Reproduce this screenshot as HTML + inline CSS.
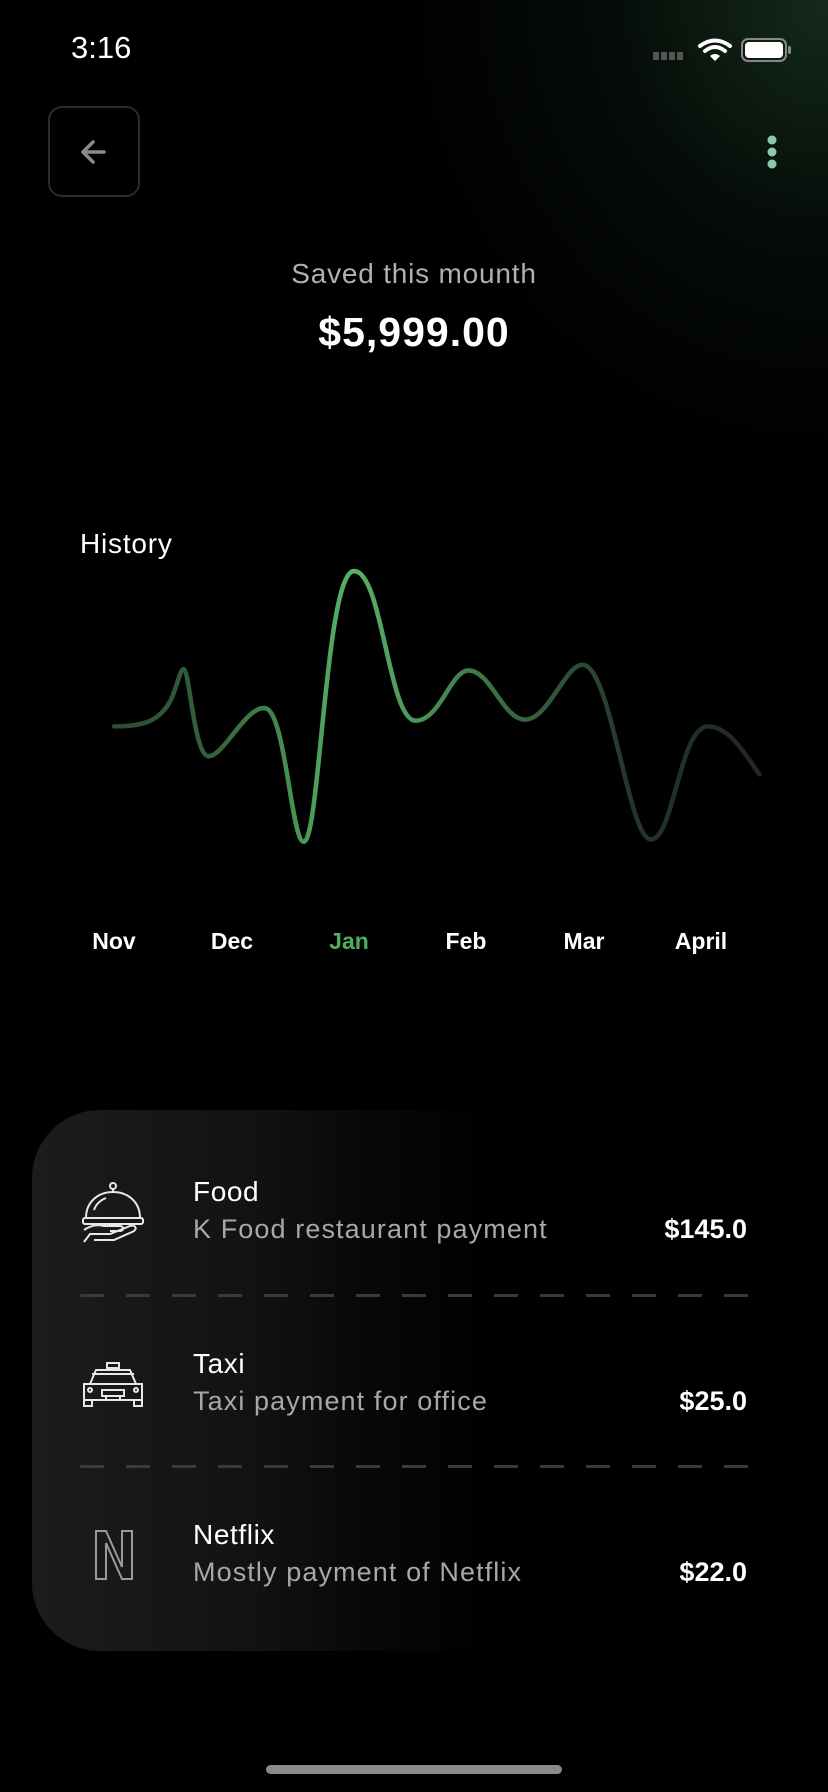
<!DOCTYPE html>
<html><head><meta charset="utf-8"><style>
*{margin:0;padding:0;box-sizing:border-box}
body{width:828px;height:1792px;overflow:hidden;background:#000;font-family:"Liberation Sans",sans-serif;color:#fff;position:relative}
.bg{position:absolute;inset:0;background:radial-gradient(ellipse 430px 460px at 828px 0px,rgba(34,70,46,.6),rgba(18,40,26,.3) 50%,rgba(0,0,0,0) 100%)}
.a{position:absolute}
.time{left:71px;top:30px;font-size:31px;font-weight:500}
.back{left:48px;top:106px;width:92px;height:91px;border:2px solid #2a2a30;border-radius:14px}
.card{left:32px;top:1110px;width:830px;height:541px;border-radius:68px 0 0 68px;background:linear-gradient(90deg,#1c1c1c 0%,#131313 25%,#070707 42%,#000 55%)}
.t{left:193px;font-size:28px;font-weight:500;color:#fff;letter-spacing:.6px}
.s{left:193px;font-size:27px;color:#a8a8a8;letter-spacing:1.1px}
.amt{right:81px;font-size:27px;font-weight:700;text-align:right}
.m{top:928px;font-size:23px;font-weight:700;transform:translateX(-50%)}
.dash{left:80px;width:668px;height:3px;background:repeating-linear-gradient(90deg,#3a3a3a 0 24px,transparent 24px 46px)}
</style></head><body>
<div class="bg"></div>
<div class="a time">3:16</div>
<svg class="a" style="left:650px;top:36px" width="146" height="28" viewBox="0 0 146 28">
<g fill="#555"><rect x="3" y="16" width="6" height="8" rx="1"/><rect x="11" y="16" width="6" height="8" rx="1"/><rect x="19" y="16" width="6" height="8" rx="1"/><rect x="27" y="16" width="6" height="8" rx="1"/></g>
<path d="M50 10 Q65 -1 80 10" stroke="#fff" stroke-width="4" fill="none" stroke-linecap="round"/>
<path d="M55 15 Q65 7 75 15" stroke="#fff" stroke-width="4" fill="none" stroke-linecap="round"/>
<path d="M60 20 L65 25 L70 20 Q65 16 60 20Z" fill="#fff"/>
<rect x="92" y="3" width="44" height="22" rx="6" fill="none" stroke="#888" stroke-width="2"/>
<rect x="95" y="6" width="38" height="16" rx="4" fill="#fff"/>
<rect x="138" y="10" width="3" height="8" rx="1.5" fill="#888"/>
</svg>
<div class="a back"></div>
<svg class="a" style="left:76px;top:134px" width="36" height="36" viewBox="0 0 36 36"><path d="M28 18H8M17 8L7 18L17 28" stroke="#8a8a8e" stroke-width="3.5" fill="none" stroke-linecap="round" stroke-linejoin="round"/></svg>
<svg class="a" style="left:764px;top:134px" width="16" height="36"><g fill="#8cc9a8"><circle cx="8" cy="6" r="4.5"/><circle cx="8" cy="18" r="4.5"/><circle cx="8" cy="30" r="4.5"/></g></svg>
<div class="a" style="left:0;width:828px;top:258px;text-align:center;font-size:28px;color:#b0b0b0;letter-spacing:.8px">Saved this mounth</div>
<div class="a" style="left:0;width:828px;top:309px;text-align:center;font-size:41px;font-weight:700;letter-spacing:1px">$5,999.00</div>
<div class="a" style="left:80px;top:528px;font-size:28px;font-weight:500;letter-spacing:.8px">History</div>
<svg class="a" style="left:0;top:0" width="828" height="1792" viewBox="0 0 725 1569">
<defs><linearGradient id="g" gradientUnits="userSpaceOnUse" x1="100" y1="0" x2="665" y2="0">
<stop offset="0" stop-color="#2d4a33"/><stop offset="0.15" stop-color="#33603b"/><stop offset="0.3" stop-color="#4a9a58"/><stop offset="0.37" stop-color="#58b267"/><stop offset="0.6" stop-color="#3a6c43"/><stop offset="0.8" stop-color="#24362a"/><stop offset="1" stop-color="#1f2822"/></linearGradient></defs>
<path d="M100,636 C125,636 140,632 150,612 C156,598 158,585 161,586 C166,588 170,660 182,662 C195,664 215,618 232,620 C250,622 255,737 266,737 C280,737 285,500 310,500 C335,500 340,631 364,631 C385,631 395,587 410,587 C430,587 440,630 460,630 C480,630 495,582 510,582 C535,582 550,735 570,735 C590,735 595,636 620,636 C640,636 655,665 665,678" stroke="url(#g)" stroke-width="4" fill="none" stroke-linecap="round"/>
</svg>
<div class="a m" style="left:114px">Nov</div>
<div class="a m" style="left:232px">Dec</div>
<div class="a m" style="left:349px;color:#4caf5e">Jan</div>
<div class="a m" style="left:466px">Feb</div>
<div class="a m" style="left:584px">Mar</div>
<div class="a m" style="left:701px">April</div>
<div class="a card"></div>
<svg class="a" style="left:80px;top:1182px" width="66" height="62" viewBox="0 0 66 62" fill="none" stroke="#e8e8e8" stroke-width="2">
<circle cx="33" cy="4" r="3"/><path d="M33 7v3M6 36C6 20 18 10 33 10S60 20 60 36"/><path d="M14 28c2-6 7-10 12-12"/><rect x="3" y="36" width="60" height="6" rx="2"/><path d="M4 48c6-4 12-6 20-4h16c4 0 4 5 0 5H30M4 60l6-8h20l20-8c6-2 8 4 2 6L34 58H14"/></svg>
<svg class="a" style="left:80px;top:1362px" width="66" height="46" viewBox="0 0 66 46" fill="none" stroke="#e8e8e8" stroke-width="2">
<rect x="27" y="1" width="12" height="5"/><path d="M12 12h42M10 22l6-14h34l6 14M4 22h58v16H4zM4 38v6h8v-6M54 38v6h8v-6M22 28h22v6H22zM26 34v4h14v-4"/><circle cx="10" cy="28" r="2"/><circle cx="56" cy="28" r="2"/></svg>
<svg class="a" style="left:95px;top:1530px" width="38" height="50" viewBox="0 0 38 50" fill="none" stroke="#9a9a9a" stroke-width="2">
<path d="M1 1h10l16 36V1h10v48H27L11 13v36H1z"/></svg>
<div class="a t" style="top:1176px">Food</div>
<div class="a s" style="top:1214px">K Food restaurant payment</div>
<div class="a amt" style="top:1214px">$145.0</div>
<div class="a dash" style="top:1294px"></div>
<div class="a t" style="top:1348px">Taxi</div>
<div class="a s" style="top:1386px">Taxi payment for office</div>
<div class="a amt" style="top:1386px">$25.0</div>
<div class="a dash" style="top:1465px"></div>
<div class="a t" style="top:1519px">Netflix</div>
<div class="a s" style="top:1557px">Mostly payment of Netflix</div>
<div class="a amt" style="top:1557px">$22.0</div>
<div class="a" style="left:266px;top:1765px;width:296px;height:9px;border-radius:5px;background:#8a8a8a"></div>
</body></html>
